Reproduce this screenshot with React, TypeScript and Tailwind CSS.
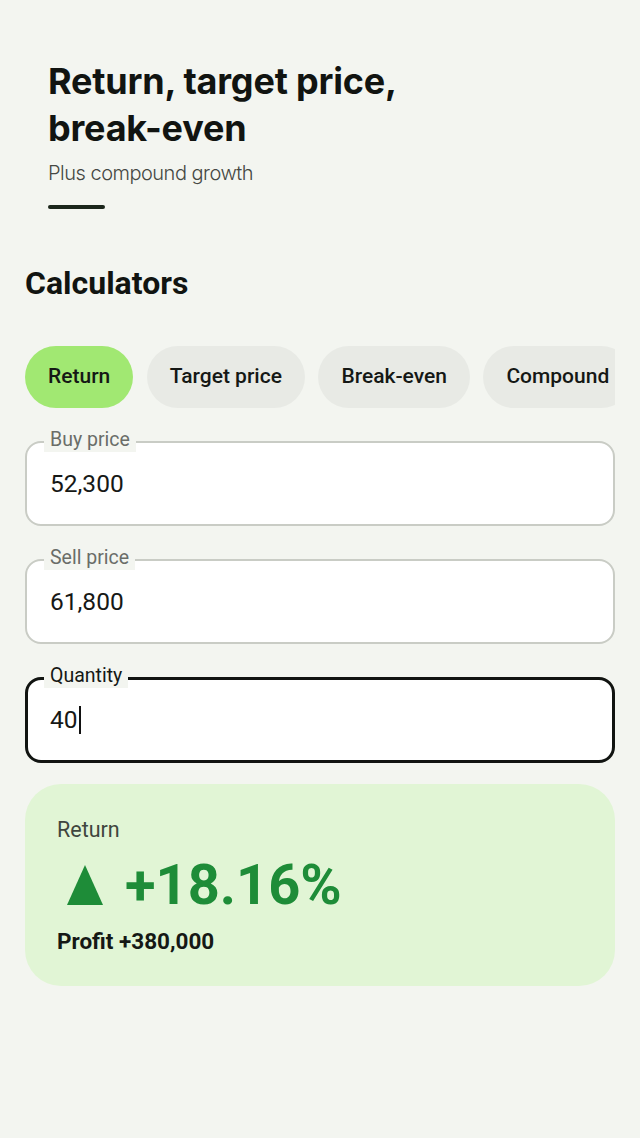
import { useState } from 'react'

const tabs = ['Return', 'Target price', 'Break-even', 'Compound']

function Field({
  label,
  value,
  focused,
}: {
  label: string
  value: string
  focused?: boolean
}) {
  return (
    <div className="relative">
      <div
        className={
          focused
            ? 'flex h-[86px] items-center rounded-[16px] border-[3px] border-[#111411] bg-white px-[22px]'
            : 'flex h-[85px] items-center rounded-[16px] border-2 border-[#c9ccc5] bg-white px-[23px]'
        }
      >
        <span className="text-[24.5px] leading-[30px] text-[#161816]">{value}</span>
        {focused && <span className="ml-[1px] h-[28px] w-[2px] bg-[#111]" />}
      </div>
      <span
        className={
          'absolute -top-[13px] left-[19px] bg-[#f3f5f0] px-[6px] text-[19.5px] leading-[24px] ' +
          (focused ? 'text-[#151815]' : 'text-[#6a6d68]')
        }
      >
        {label}
      </span>
    </div>
  )
}

export default function App() {
  const [active, setActive] = useState(0)

  return (
    <div
      className="min-h-[1138px] bg-[#f3f5f0] text-[#111411]"
      style={{ fontFamily: 'Roboto, "Liberation Sans", sans-serif' }}
    >
      {/* Header */}
      <div className="px-[48px] pt-[58px]" style={{ fontFamily: 'Inter, sans-serif' }}>
        <h1 className="text-[36px] font-bold leading-[47px] tracking-[-0.2px] text-[#111411]">
          Return, target price,
          <br />
          break-even
        </h1>
        <p className="mt-[8px] text-[20px] font-light leading-[26px] tracking-[-0.5px] text-[#454843]">
          Plus compound growth
        </p>
        <div className="mt-[19px] h-[4px] w-[57px] rounded-full bg-[#1b261b]" />
      </div>

      <div className="px-[25px]">
        <h2 className="mt-[54px] text-[32px] font-bold leading-[40px]">
          Calculators
        </h2>

        {/* Tabs */}
        <div className="mt-[43px] flex gap-[13.5px] overflow-x-auto [scrollbar-width:none]">
          {tabs.map((t, i) => (
            <button
              key={t}
              type="button"
              onClick={() => setActive(i)}
              className={
                'h-[62px] shrink-0 rounded-full px-[23px] text-[21px] font-medium text-[#151815] ' +
                (i === active ? 'bg-[#a1e872]' : 'bg-[#e8eae5]')
              }
            >
              {t}
            </button>
          ))}
        </div>

        {/* Inputs */}
        <div className="mt-[33px] flex flex-col gap-[33px]">
          <Field label="Buy price" value="52,300" />
          <Field label="Sell price" value="61,800" />
          <Field label="Quantity" value="40" focused />
        </div>

        {/* Result */}
        <div className="mt-[21px] rounded-[36px] bg-[#e1f5d5] px-[32px] pb-[31px] pt-[33px]">
          <div className="text-[21.5px] leading-[26px] text-[#3f463e]">Return</div>
          <div className="mt-[12px] flex items-center text-[#1e8c38]">
            <svg width="36" height="40" viewBox="0 0 36 40" className="ml-[10px]">
              <polygon points="18,0 36,40 0,40" fill="currentColor" />
            </svg>
            <span className="ml-[22px] text-[56px] font-bold leading-[60px]">
              +18.16%
            </span>
          </div>
          <div className="mt-[12px] text-[22.5px] font-bold leading-[28px] text-[#151815]">
            Profit +380,000
          </div>
        </div>
      </div>
    </div>
  )
}
